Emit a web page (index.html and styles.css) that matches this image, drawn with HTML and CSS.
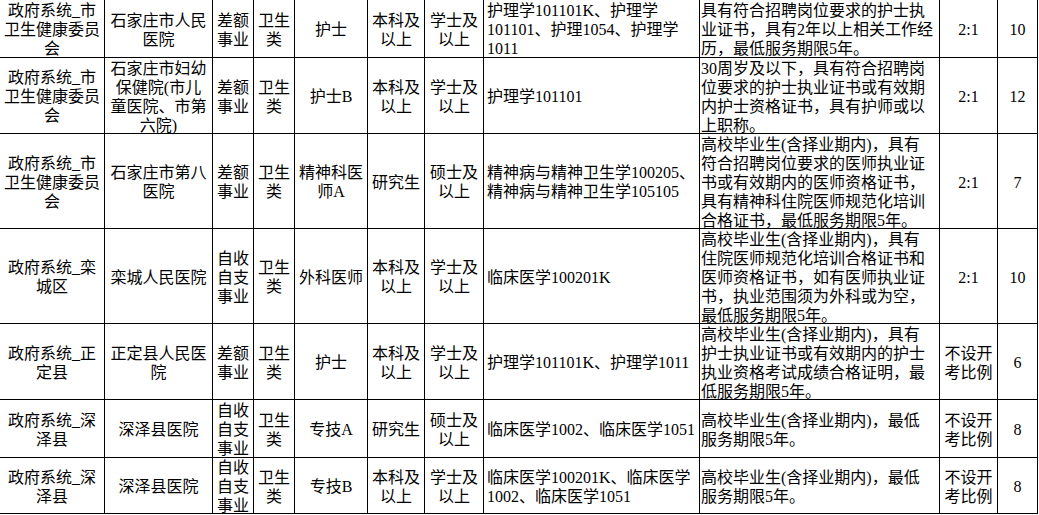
FILE: index.html
```html
<!DOCTYPE html>
<html lang="zh-CN">
<head>
<meta charset="utf-8">
<title>招聘岗位表</title>
<link rel="stylesheet" href="styles.css">
</head>
<body>
<div class="sheet">
  <div class="c">政府系统_市<br>卫生健康委员<br>会</div>
  <div class="c">石家庄市人民<br>医院</div>
  <div class="c">差额<br>事业</div>
  <div class="c">卫生<br>类</div>
  <div class="c">护士</div>
  <div class="c">本科及<br>以上</div>
  <div class="c">学士及<br>以上</div>
  <div class="c l major">护理学101101K、护理学<br>101101、护理1054、护理学<br>1011</div>
  <div class="c l cond">具有符合招聘岗位要求的护士执<br>业证书，具有2年以上相关工作经<br>历，最低服务期限5年。</div>
  <div class="c">2:1</div>
  <div class="c">10</div>

  <div class="c">政府系统_市<br>卫生健康委员<br>会</div>
  <div class="c">石家庄市妇幼<br>保健院(市儿<br>童医院、市第<br>六院)</div>
  <div class="c">差额<br>事业</div>
  <div class="c">卫生<br>类</div>
  <div class="c">护士B</div>
  <div class="c">本科及<br>以上</div>
  <div class="c">学士及<br>以上</div>
  <div class="c l major">护理学101101</div>
  <div class="c l cond">30周岁及以下，具有符合招聘岗<br>位要求的护士执业证书或有效期<br>内护士资格证书，具有护师或以<br>上职称。</div>
  <div class="c">2:1</div>
  <div class="c">12</div>

  <div class="c">政府系统_市<br>卫生健康委员<br>会</div>
  <div class="c">石家庄市第八<br>医院</div>
  <div class="c">差额<br>事业</div>
  <div class="c">卫生<br>类</div>
  <div class="c">精神科医<br>师A</div>
  <div class="c">研究生</div>
  <div class="c">硕士及<br>以上</div>
  <div class="c l major">精神病与精神卫生学100205、<br>精神病与精神卫生学105105</div>
  <div class="c l cond">高校毕业生(含择业期内)，具有<br>符合招聘岗位要求的医师执业证<br>书或有效期内的医师资格证书，<br>具有精神科住院医师规范化培训<br>合格证书，最低服务期限5年。</div>
  <div class="c">2:1</div>
  <div class="c">7</div>

  <div class="c">政府系统_栾<br>城区</div>
  <div class="c">栾城人民医院</div>
  <div class="c">自收<br>自支<br>事业</div>
  <div class="c">卫生<br>类</div>
  <div class="c">外科医师</div>
  <div class="c">本科及<br>以上</div>
  <div class="c">学士及<br>以上</div>
  <div class="c l major">临床医学100201K</div>
  <div class="c l cond">高校毕业生(含择业期内)，具有<br>住院医师规范化培训合格证书和<br>医师资格证书，如有医师执业证<br>书，执业范围须为外科或为空，<br>最低服务期限5年。</div>
  <div class="c">2:1</div>
  <div class="c">10</div>

  <div class="c">政府系统_正<br>定县</div>
  <div class="c">正定县人民医<br>院</div>
  <div class="c">差额<br>事业</div>
  <div class="c">卫生<br>类</div>
  <div class="c">护士</div>
  <div class="c">本科及<br>以上</div>
  <div class="c">学士及<br>以上</div>
  <div class="c l major">护理学101101K、护理学1011</div>
  <div class="c l cond">高校毕业生(含择业期内)，具有<br>护士执业证书或有效期内的护士<br>执业资格考试成绩合格证明，最<br>低服务期限5年。</div>
  <div class="c">不设开<br>考比例</div>
  <div class="c">6</div>

  <div class="c">政府系统_深<br>泽县</div>
  <div class="c">深泽县医院</div>
  <div class="c">自收<br>自支<br>事业</div>
  <div class="c">卫生<br>类</div>
  <div class="c">专技A</div>
  <div class="c">研究生</div>
  <div class="c">硕士及<br>以上</div>
  <div class="c l major">临床医学1002、临床医学1051</div>
  <div class="c l cond">高校毕业生(含择业期内)，最低<br>服务期限5年。</div>
  <div class="c">不设开<br>考比例</div>
  <div class="c">8</div>

  <div class="c">政府系统_深<br>泽县</div>
  <div class="c">深泽县医院</div>
  <div class="c">自收<br>自支<br>事业</div>
  <div class="c">卫生<br>类</div>
  <div class="c">专技B</div>
  <div class="c">本科及<br>以上</div>
  <div class="c">学士及<br>以上</div>
  <div class="c l major">临床医学100201K、临床医学<br>1002、临床医学1051</div>
  <div class="c l cond">高校毕业生(含择业期内)，最低<br>服务期限5年。</div>
  <div class="c">不设开<br>考比例</div>
  <div class="c">8</div>
</div>
</body>
</html>
```

FILE: styles.css
```css
html, body {
  margin: 0;
  padding: 0;
  background: #ffffff;
}

body {
  font-family: "Liberation Serif", "Noto Sans CJK SC", serif;
  font-size: 16px;
  line-height: 19px;
  color: #000000;
}

.sheet {
  display: grid;
  width: 1038px;
  grid-template-columns: 105px 108px 41px 41px 73px 57px 59px 216px 240px 58px 40px;
  grid-template-rows: 58px 76px 95px 95px 76px 58px 56px;
}

.c {
  box-sizing: border-box;
  border-right: 1px solid #000000;
  border-bottom: 1px solid #000000;
  display: flex;
  align-items: center;
  justify-content: center;
  text-align: center;
  padding-top: 2px;
  white-space: nowrap;
  overflow: visible;
}

.c.l {
  justify-content: flex-start;
  text-align: left;
}

.major {
  padding-left: 3px;
}

.cond {
  padding-left: 1px;
}
```
